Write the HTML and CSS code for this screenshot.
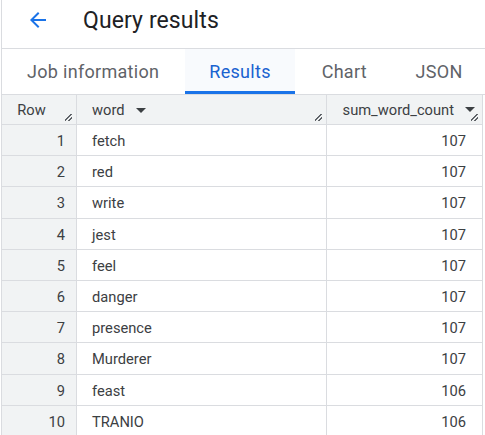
FILE: index.html
```html
<!DOCTYPE html>
<html>
<head>
<meta charset="utf-8">
<link rel="stylesheet" href="styles.css">
</head>
<body>
<div class="panel">
  <header class="titlebar">
    <svg class="back" width="24" height="24" viewBox="0 0 24 24"><path d="M20 11H7.83l5.59-5.59L12 4l-8 8 8 8 1.41-1.41L7.83 13H20v-2z" fill="#1a73e8"/></svg>
    <h1 class="title">Query results</h1>
  </header>
  <nav class="tabs">
    <div class="tab tab-job">Job information</div>
    <div class="tab tab-active">Results</div>
    <div class="tab tab-chart">Chart</div>
    <div class="tab tab-json">JSON</div>
  </nav>
  <div class="grid">
    <div class="hcell hrow">Row<span class="grip"></span></div>
    <div class="hcell hword">word <span class="caret"></span><span class="grip"></span></div>
    <div class="hcell hsum">sum_word_count <span class="caret"></span><span class="grip"></span></div>

    <div class="cell num">1</div><div class="cell word">fetch</div><div class="cell val">107</div>
    <div class="cell num">2</div><div class="cell word">red</div><div class="cell val">107</div>
    <div class="cell num">3</div><div class="cell word">write</div><div class="cell val">107</div>
    <div class="cell num">4</div><div class="cell word">jest</div><div class="cell val">107</div>
    <div class="cell num">5</div><div class="cell word">feel</div><div class="cell val">107</div>
    <div class="cell num">6</div><div class="cell word">danger</div><div class="cell val">107</div>
    <div class="cell num">7</div><div class="cell word">presence</div><div class="cell val">107</div>
    <div class="cell num">8</div><div class="cell word">Murderer</div><div class="cell val">107</div>
    <div class="cell num">9</div><div class="cell word">feast</div><div class="cell val">106</div>
    <div class="cell num">10</div><div class="cell word">TRANIO</div><div class="cell val">106</div>
  </div>
</div>
</body>
</html>
```
FILE: styles.css
```css
* { box-sizing: border-box; }
html, body { margin: 0; padding: 0; background: #fff; }
body { font-family: Roboto, "Noto Sans", Arial, sans-serif; width: 485px; height: 435px; overflow: hidden; }
.panel { margin-left: 1px; border-left: 1px solid #dadce0; height: 435px; }
.titlebar { height: 49px; display: flex; align-items: center; border-bottom: 1px solid #dadce0; padding-left: 24px; padding-bottom: 8px; }
.back { flex: none; }
.title { margin: 0 0 0 33px; font-size: 23px; font-weight: 400; color: #202124; letter-spacing: 0.1px; }
.tabs { height: 46px; display: flex; border-bottom: 1px solid #dadce0; }
.tab { font-size: 18px; color: #5f6368; display: flex; align-items: center; justify-content: center; padding-bottom: 1px; letter-spacing: 0.3px; }
.tab-job { width: 183px; justify-content: flex-start; padding-left: 25px; }
.tab-active { width: 111px; color: #1a62d0; background: #f8fafd; border-bottom: 3px solid #1a73e8; padding-top: 3px; }
.tab-chart { width: 98px; }
.tab-json { width: 92px; }
.grid { display: grid; grid-template-columns: 75px 250px 156px; grid-auto-rows: 31.2px; grid-template-rows: 30px; }
.hcell { position: relative; background: #f1f3f4; color: #3c4043; font-size: 14.7px; display: flex; align-items: center; border-right: 1px solid #dadce0; border-bottom: 1px solid #dadce0; padding-top: 1px; }
.hrow { justify-content: center; padding-right: 15px; }
.hword { padding-left: 15px; }
.hsum { justify-content: flex-end; padding-right: 28px; }
.caret { position: absolute; right: 0; width: 0; height: 0; border-left: 5px solid transparent; border-right: 5px solid transparent; border-top: 5px solid #3c4043; }
.hword .caret { position: static; margin-left: 11px; margin-top: 1px; }
.hsum .caret { right: 7px; top: 12px; }
.grip { position: absolute; right: 4px; bottom: 3px; width: 7px; height: 7px; background: linear-gradient(135deg, transparent 42%, #5f6368 42%, #5f6368 54%, transparent 54%, transparent 70%, #5f6368 70%, #5f6368 82%, transparent 82%); }
.cell { font-size: 14.7px; color: #3c4043; display: flex; align-items: center; border-right: 1px solid #dadce0; border-bottom: 1px solid #dadce0; padding-top: 2px; }
.num { background: #f1f3f4; justify-content: flex-end; padding-right: 11px; }
.word { padding-left: 15px; }
.val { justify-content: flex-end; padding-right: 16px; }
```
